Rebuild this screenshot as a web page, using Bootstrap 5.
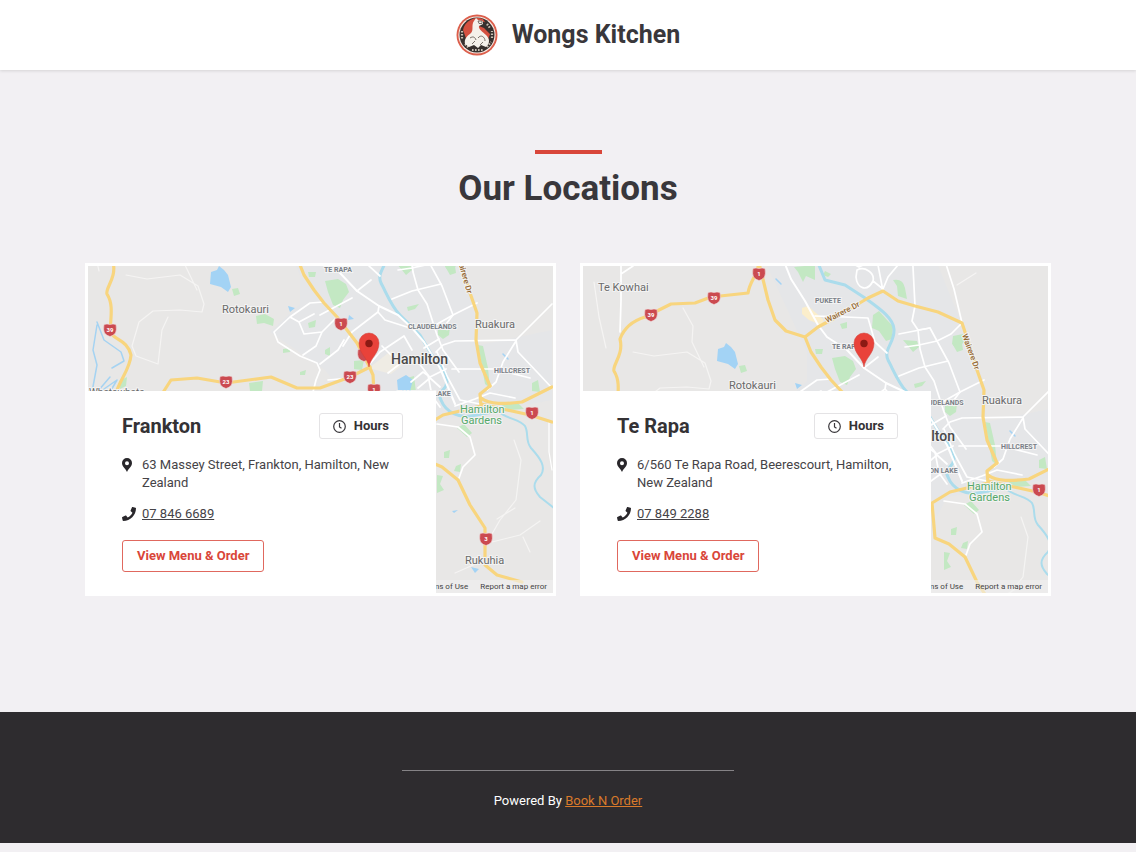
<!DOCTYPE html>
<html lang="en">
<head>
<meta charset="utf-8">
<meta name="viewport" content="width=device-width, initial-scale=1">
<title>Wongs Kitchen</title>
<link href="https://cdn.jsdelivr.net/npm/bootstrap@5.3.0/dist/css/bootstrap.min.css" rel="stylesheet">
<style>
  body { font-family: Roboto, "Liberation Sans", sans-serif; font-size: 13px; line-height: 18px; color: #454347; background: #f2f0f3; }
  .site-header { height: 70px; background: #fff; box-shadow: 0 1px 3px rgba(0,0,0,.12); }
  .brand { gap: 14px; }
  .brand-name { font-size: 25px; line-height: 32px; font-weight: 700; color: #39373b; }
  .locations { max-width: 990px; padding-top: 80px; padding-bottom: 116px; }
  .accent-bar { width: 67px; height: 4px; background: #d9463a; }
  .page-title { font-size: 35px; line-height: 44px; font-weight: 700; margin: 13px 0 52px; color: #39373b; }
  .location-card { border: 3px solid #fff; height: 333px; overflow: hidden; background: #e8e8e8; }
  .map-art { width: 100%; height: 100%; display: block; }
  .info-panel { left: -3px; bottom: -3px; width: 351px; height: 205px; background: #fff; padding: 22px 33px 24px 37px; }
  .place-name { font-size: 20px; line-height: 26px; font-weight: 700; color: #343235; }
  .btn-hours { font-size: 13px; line-height: 18px; font-weight: 700; color: #343235; padding: 3px 13px; border: 1px solid #e4e3e5; border-radius: 3px; background: #fff; }
  .btn-order { font-size: 13px; line-height: 18px; font-weight: 700; color: #d9463a; padding: 6px 14px; border: 1px solid #e0685e; border-radius: 3px; }
  .btn-order:hover { color: #fff; background: #d9463a; }
  .detail-icon { width: 14px; height: 14px; flex: none; }
  .detail-row { gap: 6px; }
  .address-row { margin-top: 17px; }
  .address-row .detail-icon { margin-top: 2px; }
  .phone-row { margin: 13px 0 17px; }
  .phone-link { color: #454347; }
  .map-credit { right: 0; bottom: 0; font-size: 8px; line-height: 13px; gap: 12px; padding: 0 6px; background: rgba(240,240,240,.6); }
  .map-credit a { color: #444; text-decoration: none; }
  .site-footer { background: #2e2c2f; color: #fff; height: 131px; padding-top: 58px; margin-bottom: 9px; }
  .footer-rule { width: 332px; border-top: 1px solid #858386; }
  .site-footer p { margin: 21px 0 0; }
  .site-footer a { color: #d97a2b; }
  .map-art text { font-family: Roboto, "Liberation Sans", sans-serif; fill: #6a6a6a; stroke: #f3f3f3; stroke-width: 2px; paint-order: stroke; }
  .map-art .town { font-size: 11px; }
  .map-art .hamlet { font-size: 10px; }
  .map-art .city { font-size: 14px; font-weight: 500; fill: #4a4a4a; }
  .map-art .suburb { font-size: 7px; font-weight: 700; fill: #7a7f87; }
  .map-art .parkname { font-size: 11px; fill: #55a869; }
  .map-art .street { font-size: 8px; font-weight: 500; fill: #94672e; }
  .map-art .shieldnum { font-size: 6px; font-weight: 700; fill: #fff; stroke: none; text-anchor: middle; }
</style>
</head>
<body>
<svg width="0" height="0" class="position-absolute" aria-hidden="true">
  <defs>
    <path id="shield" d="M-6-5.500Q-3-6.500 0-5.500Q3-6.500 6-5.500Q7 0 5.500 3Q3 6 0 6.500Q-3 6-5.500 3Q-7 0-6-5.500Z" fill="#cb4a50" stroke="#f0dede" stroke-width=".6"/>
    <g id="pin">
      <path d="M0 1C-1-8-10-12-10-23A10 10 0 0 1 10-23C10-12 1-8 0 1Z" fill="#e9423a" stroke="#d23c34" stroke-width=".5"/>
      <circle cy="-22.500" r="3.700" fill="#8c1a14"/>
    </g>
    <g id="basemap" fill="none" stroke-linecap="round" stroke-linejoin="round">
      <rect x="70" y="180" width="490" height="420" fill="#e8e7e6"/>
      <path d="M256 180L345 180L430 186L452 240L475 300L480 345L552 330L552 400L500 410L440 420L430 440L420 400L345 395L325 370L270 332L300 304L300 275Z" fill="#e5e6e8"/>
      <!-- parks -->
      <g fill="#c3e8c3">
        <path d="M325 281L338 279L346 284L349 292L343 300L340 308L333 305L328 292Z"/>
        <path d="M366 238L372 234L380 243L386 249L385 262L379 264L372 254L365 251Z"/>
        <path d="M386 203Q396 201 398 211L400 222L391 219L390 209ZM446 259L456 257L459 263L450 272L445 267ZM396 263L410 264L412 270L406 275L402 270Z"/>
        <path d="M287 190L308 188L308 203L299 199L296 205L291 195ZM318 194L324 197L321 200L316 198ZM333 247L340 245L340 251L335 252ZM232 289L238 288L240 294L234 296ZM256 316L265 314L274 319L273 326L264 323L257 324ZM283 349L290 348L290 352L283 353ZM249 383L263 381L262 391L250 391Z"/>
        <path d="M438 328L450 327L449 335L443 339L438 335ZM407 307L419 304L415 309L408 311ZM446 268L455 266L456 273L450 275ZM354 361L364 360L362 370L354 369ZM407 378L414 376L416 392L406 392ZM532 383L538 380L540 392L532 391ZM478 345L483 346L488 368L490 388L485 384ZM444 452L450 450L449 458L444 458ZM456 466L461 464L460 472L454 471ZM437 475L443 476L440 484L444 490L437 493ZM457 428L464 424L472 433L467 437ZM497 402L518 403L524 409L509 410ZM308 272L316 272L315 277L309 277ZM308 323L316 320L315 327L309 328ZM119 381L127 377L126 386L120 389ZM300 372L306 370L305 375L300 375ZM325 350L330 347L330 356L325 354Z"/>
      </g>
      <path d="M295 231L301 229L317 243L314 248L302 243L295 237Z" fill="#fbeecb"/>
      <path d="M369 368L392 350L405 363L391 374L376 370Z" fill="#efece4"/>
      <!-- lakes -->
      <g fill="#a3d3f5">
        <path d="M211 272L217 270L219 266L224 270L228 275L231 287L228 292L221 287L210 284Z"/>
        <path d="M397 380L406 375L413 380L410 391L398 391ZM288 306L295 308L290 312ZM349 315L354 319L348 320ZM471 567L479 569L475 573ZM452 511L458 510L454 513Z"/>
      </g>
      <!-- minor roads -->
      <g stroke="#f5f4f3" stroke-width="1.200">
        <path d="M126 275L147 279L180 275L198 286L204 304L202 312L180 310L153 311L139 322L132 346L136 356L158 364M158 364L162 330L168 317M176 231L186 249L185 265L197 290M87 205L92 240L99 271M450 208L469 196"/>
        <path d="M514 440L521 460L516 500L500 520L492 534M492 542L520 535L540 521M523 537L530 552M455 573L480 562M497 519L515 508"/>
      </g>
      <!-- streams and river -->
      <path d="M97 325L93 350L97 365L92 392M97 322L104 340L121 352L124 361L112 368M110 392L117 380L104 389M110 377L98 391" stroke="#a5d3f2" stroke-width="1.500"/>
      <path d="M311 186L318 203L338 208L358 221C370 230 386 240 387 252C388 266 376 272 381 283C386 292 391 306 400 315L420 335L430 352C436 362 448 370 447 382C446 392 436 390 441 400C446 413 460 418 471 416L498 411" stroke="#abdcec" stroke-width="3"/>
      <path d="M498 411C506 419 520 419 525 426C529 433 525 441 531 448C541 459 546 467 541 475C532 483 533 489 540 497L554 508" stroke="#abdcec" stroke-width="2"/>
      <path d="M503 354L508 359M269 202L274 207" stroke="#a3d3f5" stroke-width="1.500"/>
      <!-- suburban streets -->
      <g stroke="#fff" stroke-width="1.700">
        <path d="M114 180L114 224L113 255M114 197L126 189"/>
        <path d="M276 182L284 202L298 224L311 248L320 260L340 273L357 291L379 306L398 315L412 328L424 342L440 368L455 404" stroke-width="2"/>
        <path d="M324 302L310 303L290 317L274 332L278 342L300 356L317 363L320 370L316 380L313 392M314 314L299 322L290 317M299 322L304 334L322 332L337 317M322 332L316 346L303 355M320 364L338 350L344 340M328 380L350 378"/>
        <path d="M339 183L352 190L360 186M350 193C358 189 368 196 366 204C360 216 350 211 349 200ZM366 204L376 212L381 200L391 188L392 180M376 214L371 188"/>
        <path d="M408 229L406 190L405 180M408 229L405 244L411 253L413 272L418 290L427 304L437 335L443 350L459 372M438 184L447 212L455 246L444 257L430 264L412 268L398 270M411 253L423 251L430 264L442 286L453 315L443 328"/>
        <path d="M308 239L338 240L361 241L368 265L380 276M392 257L423 251M357 291L371 280M392 299L412 291L441 284M453 315L477 303M453 315L432 327"/>
        <path d="M379 306L378 312L352 332L343 346M378 312L385 320L410 328M352 298L320 315M368 366L380 352L404 336L412 350M388 373L410 356M382 346L396 360"/>
        <path d="M436 352L443 345L455 341L516 340L552 304M516 340L518 352L538 373L552 388M516 341L503 362L496 382L487 390M452 369L495 369L530 378M437 352L448 378L460 400L480 404M446 369L430 377L423 372L411 382M455 406L475 399L490 393L515 398M424 348L439 339M418 388L430 378L440 387"/>
        <path d="M437 424L458 427L470 437L475 455L463 467L459 478M418 362L428 375L432 396L440 407M424 404L435 396"/>
        <path d="M549 421L549 452L552 470" stroke-width="1.200"/>
      </g>
      <!-- highways -->
      <g stroke="#f8d57e" stroke-width="3.200">
        <path d="M251 190C249 200 243 204 241 216L204 220L188 226L164 227L138 240C125 244 117 251 113 262C117 278 105 288 107 294C112 302 112 310 110 330C112 341 127 338 131 355C130 370 119 380 115 396"/>
        <path d="M252 186L261 223L268 243L279 254L298 260L304 275L314 290L324 303L337 317L357 343L369 366L373 375L374 394"/>
        <path d="M298 260L311 250L328 241L361 221L376 214L391 224L408 229L431 235L455 246L465 276L470 293L477 313L476 340L480 363L490 386"/>
        <path d="M162 394L171 380L197 378L226 383L271 377L297 388L320 388L350 377L370 367"/>
        <path d="M490 386L480 394L481 406L443 415L425 426L428 461L442 467L458 480L470 505L485 528L485 565L497 575L522 582M481 398C490 405 505 404 522 402L552 387M481 404L507 410L530 415L552 422"/>
      </g>
    </g>
  </defs>
</svg>

<header class="site-header d-flex justify-content-center align-items-center position-relative">
  <div class="brand d-flex align-items-center">
    <svg width="42" height="42" viewBox="0 0 42 42" role="img" aria-label="Wongs Kitchen logo">
      <circle cx="21" cy="21" r="20.500" fill="#dc5f4c"/>
      <circle cx="21" cy="21" r="18.600" fill="#f8e9e2"/>
      <circle cx="21" cy="21" r="17.500" fill="#37302d"/>
      <path d="M7 16A15 15 0 0 1 27 5L35 18L30 30L12 30Z" fill="#d4503f"/>
      <path d="M24 7L32 9L37 17L35 21L28 14L23 12Z" fill="#37302d"/>
      <path d="M6 17L6 26M9 30L13 34M16 36L28 36M31 33L35 28M36 24L36 17M31 10L34 14" fill="none" stroke="#c9bfb2" stroke-width="2.200" stroke-dasharray="1.600 1.400"/>
      <path d="M9 30C8 25 11 22 15 19C18 16 15 11 18 7L20 4L22 6L27 7L27 10L23 12C22 15 27 18 30 21C34 25 34 29 30 33L25 31L22 34L18 31L13 33Z" fill="#f5f1ea"/>
      <path d="M22 7L26 7L26 9.500L23 9.500ZM14 24C17 22 19 23 20 26M22 24C25 20 29 23 29 27M16 30L19 27M24 31L27 28" fill="none" stroke="#5a5049" stroke-width=".8"/>
    </svg>
    <span class="brand-name">Wongs Kitchen</span>
  </div>
</header>

<main class="container locations">
  <div class="accent-bar mx-auto"></div>
  <h1 class="page-title text-center">Our Locations</h1>
  <div class="row">
    <section class="col-md-6">
      <div class="location-card position-relative">
        <svg class="map-art" viewBox="88 266 465 327" preserveAspectRatio="xMidYMid slice" role="img" aria-label="Map of Frankton">
          <use href="#basemap"/>
          <text class="town" x="222" y="313">Rotokauri</text>
          <text class="suburb" x="324" y="272">TE RAPA</text>
          <text class="suburb" x="408" y="329">CLAUDELANDS</text>
          <text class="town" x="475" y="328">Ruakura</text>
          <text class="city" x="391" y="364">Hamilton</text>
          <text class="suburb" x="494" y="373">HILLCREST</text>
          <text class="suburb" x="397" y="396">HAMILTON LAKE</text>
          <text class="parkname" x="460" y="413">Hamilton</text>
          <text class="parkname" x="461" y="424">Gardens</text>
          <text class="town" x="465" y="564">Rukuhia</text>
          <text class="hamlet" x="89" y="396">Whatawhata</text>
          <text class="street" transform="translate(457 258) rotate(74)">Wairere Dr</text>
          <use href="#shield" x="110" y="330"/><text class="shieldnum" x="110" y="332">39</text>
          <use href="#shield" x="226" y="382"/><text class="shieldnum" x="226" y="384">23</text>
          <use href="#shield" x="341" y="324"/><text class="shieldnum" x="341" y="326">1</text>
          <use href="#shield" x="350" y="377"/><text class="shieldnum" x="350" y="379">23</text>
          <use href="#shield" x="364" y="355"/>
          <use href="#shield" x="374" y="390"/><text class="shieldnum" x="374" y="392">1</text>
          <use href="#shield" x="532" y="413"/><text class="shieldnum" x="532" y="415">1</text>
          <use href="#shield" x="486" y="539"/><text class="shieldnum" x="486" y="541">3</text>
          <use href="#pin" x="369" y="366"/>
        </svg>
        <div class="map-credit position-absolute d-flex"><a href="#terms">Terms of Use</a><a href="#report">Report a map error</a></div>
        <div class="info-panel position-absolute">
          <div class="d-flex justify-content-between align-items-center">
            <h2 class="place-name mb-0">Frankton</h2>
            <button type="button" class="btn-hours d-flex align-items-center gap-2">
              <svg width="13" height="13" viewBox="0 0 13 13" fill="none" stroke="#39373b" stroke-width="1.200" aria-hidden="true"><circle cx="6.500" cy="6.500" r="5.800"/><path d="M6.500 3V7L8.500 8.300"/></svg>
              Hours
            </button>
          </div>
          <div class="detail-row address-row d-flex">
            <svg class="detail-icon" viewBox="0 0 14 14" aria-hidden="true"><path fill="#29272b" fill-rule="evenodd" d="M5 14C3.500 10.500 0 8.500 0 5A5 5 0 0 1 10 5C10 8.500 6.500 10.500 5 14ZM5 3.200A2 2 0 1 0 5 7.200A2 2 0 1 0 5 3.200Z"/></svg>
            <span>63 Massey Street, Frankton, Hamilton, New Zealand</span>
          </div>
          <div class="detail-row phone-row d-flex align-items-center">
            <svg class="detail-icon" viewBox="0 0 512 512" aria-hidden="true"><path fill="#29272b" d="M493 25L389 1C378-2 366 4 362 15L314 127C310 137 312 149 321 156L382 206C346 283 283 346 206 382L156 321C149 313 137 310 127 314L15 362C5 367-2 378 1 390L25 494C27 504 37 512 48 512C304 512 512 305 512 48C512 37 504 27 493 25Z"/></svg>
            <a class="phone-link" href="tel:078466689">07 846 6689</a>
          </div>
          <a class="btn-order d-inline-block text-decoration-none" href="#frankton">View Menu &amp; Order</a>
        </div>
      </div>
    </section>
    <section class="col-md-6">
      <div class="location-card position-relative">
        <svg class="map-art" viewBox="76 189 465 327" preserveAspectRatio="xMidYMid slice" role="img" aria-label="Map of Te Rapa">
          <use href="#basemap"/>
          <text class="town" x="91" y="214">Te Kowhai</text>
          <text class="town" x="222" y="312">Rotokauri</text>
          <text class="suburb" x="308" y="226">PUKETE</text>
          <text class="suburb" x="325" y="272">TE RAPA</text>
          <text class="suburb" x="408" y="328">CLAUDELANDS</text>
          <text class="town" x="475" y="327">Ruakura</text>
          <text class="city" x="391" y="364">Hamilton</text>
          <text class="suburb" x="494" y="372">HILLCREST</text>
          <text class="suburb" x="397" y="396">HAMILTON LAKE</text>
          <text class="parkname" x="460" y="413">Hamilton</text>
          <text class="parkname" x="462" y="424">Gardens</text>
          <text class="street" transform="translate(320 246) rotate(-27)">Wairere Dr</text>
          <text class="street" transform="translate(455 258) rotate(70)">Wairere Dr</text>
          <use href="#shield" x="144" y="238"/><text class="shieldnum" x="144" y="240">39</text>
          <use href="#shield" x="207" y="221"/><text class="shieldnum" x="207" y="223">39</text>
          <use href="#shield" x="252" y="197"/><text class="shieldnum" x="252" y="199">1</text>
          <use href="#shield" x="532" y="413"/><text class="shieldnum" x="532" y="415">1</text>
          <use href="#pin" x="357" y="289"/>
        </svg>
        <div class="map-credit position-absolute d-flex"><a href="#terms">Terms of Use</a><a href="#report">Report a map error</a></div>
        <div class="info-panel position-absolute">
          <div class="d-flex justify-content-between align-items-center">
            <h2 class="place-name mb-0">Te Rapa</h2>
            <button type="button" class="btn-hours d-flex align-items-center gap-2">
              <svg width="13" height="13" viewBox="0 0 13 13" fill="none" stroke="#39373b" stroke-width="1.200" aria-hidden="true"><circle cx="6.500" cy="6.500" r="5.800"/><path d="M6.500 3V7L8.500 8.300"/></svg>
              Hours
            </button>
          </div>
          <div class="detail-row address-row d-flex">
            <svg class="detail-icon" viewBox="0 0 14 14" aria-hidden="true"><path fill="#29272b" fill-rule="evenodd" d="M5 14C3.500 10.500 0 8.500 0 5A5 5 0 0 1 10 5C10 8.500 6.500 10.500 5 14ZM5 3.200A2 2 0 1 0 5 7.200A2 2 0 1 0 5 3.200Z"/></svg>
            <span>6/560 Te Rapa Road, Beerescourt, Hamilton, New Zealand</span>
          </div>
          <div class="detail-row phone-row d-flex align-items-center">
            <svg class="detail-icon" viewBox="0 0 512 512" aria-hidden="true"><path fill="#29272b" d="M493 25L389 1C378-2 366 4 362 15L314 127C310 137 312 149 321 156L382 206C346 283 283 346 206 382L156 321C149 313 137 310 127 314L15 362C5 367-2 378 1 390L25 494C27 504 37 512 48 512C304 512 512 305 512 48C512 37 504 27 493 25Z"/></svg>
            <a class="phone-link" href="tel:078492288">07 849 2288</a>
          </div>
          <a class="btn-order d-inline-block text-decoration-none" href="#te-rapa">View Menu &amp; Order</a>
        </div>
      </div>
    </section>
  </div>
</main>

<footer class="site-footer text-center">
  <div class="footer-rule mx-auto"></div>
  <p>Powered By <a href="#booknorder">Book N Order</a></p>
</footer>
<script src="https://cdn.jsdelivr.net/npm/bootstrap@5.3.0/dist/js/bootstrap.bundle.min.js"></script>
</body>
</html>
